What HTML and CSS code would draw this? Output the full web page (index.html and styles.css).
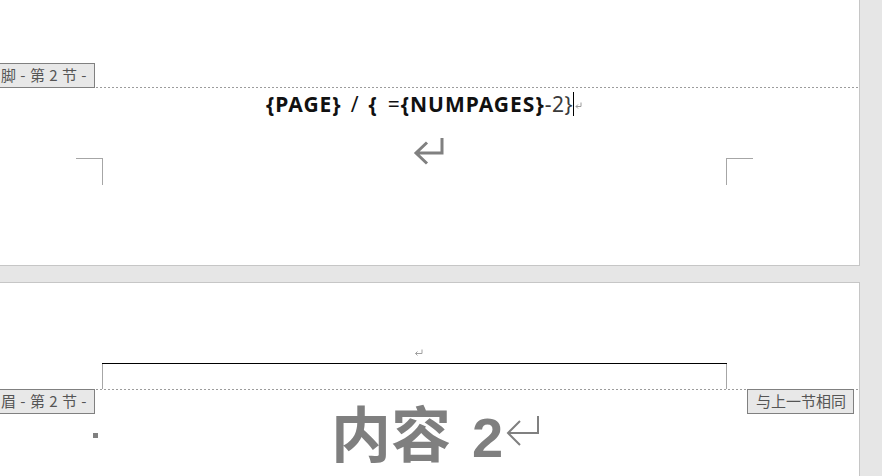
FILE: index.html
```html
<!DOCTYPE html>
<html lang="zh-CN">
<head>
<meta charset="utf-8">
<title>页眉页脚 - 第 2 节</title>
<link rel="stylesheet" href="styles.css">
</head>
<body>
<main class="canvas">
  <section class="page page-one">
    <div class="section-rule"></div>
    <span class="tag tag-footer">脚 - 第 2 节 -</span>
    <p class="field-line"><b>{PAGE}</b><span class="gap"></span>/<span class="gap"></span><b>{</b><span class="gap wide"></span>=<b>{NUMPAGES}</b><span class="thin">-2}</span><span class="caret"></span><svg class="pmark-small" width="7" height="7" viewBox="0 0 7 7"><path d="M6 0.5V4.5H1M3 2.5L1 4.5L3 6.5" fill="none" stroke="#9a9a9a" stroke-width="1"/></svg></p>
    <div class="margin-row">
      <span class="corner corner-left"></span>
      <svg class="pmark-big" width="34" height="30" viewBox="0 0 34 30"><path d="M30 2V17H4M15 6.5L4 17L15 27.5" fill="none" stroke="#808080" stroke-width="3"/></svg>
      <span class="corner corner-right"></span>
    </div>
  </section>

  <section class="page page-two">
    <div class="header-mark-row">
      <svg class="pmark-tiny" width="9" height="7" viewBox="0 0 9 7"><path d="M8 0.5V4.5H1.5M3.5 2.5L1.5 4.5L3.5 6.5" fill="none" stroke="#a0a0a0" stroke-width="1"/></svg>
    </div>
    <div class="header-frame"><div class="header-rule"></div></div>
    <div class="section-rule"></div>
    <span class="tag tag-header">眉 - 第 2 节 -</span>
    <span class="tag tag-same">与上一节相同</span>
    <div class="content-row">
      <span class="para-marker"></span>
      <p class="heading"><span class="cjk">内容</span><span class="digit">2</span><svg class="pmark-heading" width="36" height="34" viewBox="0 0 36 34"><path d="M33 2V19H3M15 7L3 19L15 31" fill="none" stroke="#808080" stroke-width="2"/></svg></p>
    </div>
  </section>
</main>
</body>
</html>
```
FILE: styles.css
```css
html, body {
  margin: 0;
  padding: 0;
}
body {
  background: #e6e6e6;
  font-family: "Noto Sans", "Noto Sans CJK SC", sans-serif;
  overflow: hidden;
}
.canvas {
  display: flex;
  flex-direction: column;
  width: 882px;
  height: 476px;
}
.page {
  position: relative;
  background: #ffffff;
  width: 859px;
  border-right: 1px solid #c6c6c6;
  box-sizing: content-box;
}
.page-one {
  height: 265px;
  border-bottom: 1px solid #c6c6c6;
}
.page-two {
  margin-top: 16px;
  border-top: 1px solid #c6c6c6;
  flex: 1;
  overflow: hidden;
}
.section-rule {
  height: 1px;
  background: repeating-linear-gradient(90deg, #9c9c9c 0 2px, transparent 2px 4px);
}
.page-one .section-rule {
  margin-top: 87px;
}
.tag {
  position: absolute;
  box-sizing: border-box;
  height: 25px;
  background: #e8e8e8;
  border: 1px solid #808080;
  color: #555555;
  font-family: "Noto Sans CJK SC", sans-serif;
  font-size: 15px;
  line-height: 22px;
  white-space: nowrap;
}
.tag-footer,
.tag-header {
  left: -1px;
  width: 96px;
  padding-left: 1px;
  word-spacing: 1px;
}
.tag-footer {
  top: 63px;
}
.tag-header {
  top: 106px;
}
.tag-same {
  left: 747px;
  top: 106px;
  width: 107px;
  padding-left: 8px;
}
.field-line {
  margin: 4px 0 0;
  padding-left: 266px;
  height: 24px;
  line-height: 24px;
  font-size: 21px;
  letter-spacing: 1px;
  color: #111111;
  white-space: nowrap;
  display: flex;
  align-items: center;
}
.field-line b {
  font-weight: 700;
}
.gap {
  display: inline-block;
  width: 9px;
}
.gap.wide {
  width: 10px;
}
.field-line .thin {
  color: #3a3a3a;
  font-weight: 400;
  letter-spacing: 0.5px;
}
.caret {
  display: inline-block;
  width: 1px;
  height: 24px;
  background: #000;
  margin-left: 0;
}
.pmark-small {
  margin-left: 1px;
  margin-top: 2px;
}
.margin-row {
  display: flex;
  align-items: flex-start;
  margin-top: 20px;
  padding-left: 76px;
}
.corner {
  width: 26px;
  height: 26px;
  margin-top: 22px;
  border-top: 1px solid #a6a6a6;
}
.corner-left {
  border-right: 1px solid #a6a6a6;
}
.corner-right {
  border-left: 1px solid #a6a6a6;
  margin-left: 280px;
}
.pmark-big {
  margin-left: 309px;
}
.header-mark-row {
  display: flex;
  padding-left: 414px;
  padding-top: 66px;
  height: 7px;
}
.header-frame {
  box-sizing: border-box;
  margin: 7px 0 0 102px;
  width: 625px;
  height: 26px;
  border-left: 1px solid #a6a6a6;
  border-right: 1px solid #a6a6a6;
}
.header-rule {
  margin: 2px -1px 0;
  height: 1px;
  background: #000;
}
.content-row {
  display: flex;
  align-items: flex-start;
}
.para-marker {
  width: 5px;
  height: 5px;
  background: #808080;
  margin: 43px 0 0 93px;
}
.heading {
  margin: 10px 0 0 233px;
  font-family: "Noto Sans CJK SC", sans-serif;
  font-weight: 700;
  font-size: 60px;
  line-height: 62px;
  color: #7f7f7f;
  white-space: nowrap;
  display: flex;
  align-items: baseline;
}
.digit {
  font-family: "Liberation Sans", "Noto Sans", sans-serif;
  font-weight: 700;
  font-size: 56px;
  margin-left: 21px;
}
.pmark-heading {
  margin-left: 2px;
  align-self: flex-start;
  margin-top: 14px;
}
```
